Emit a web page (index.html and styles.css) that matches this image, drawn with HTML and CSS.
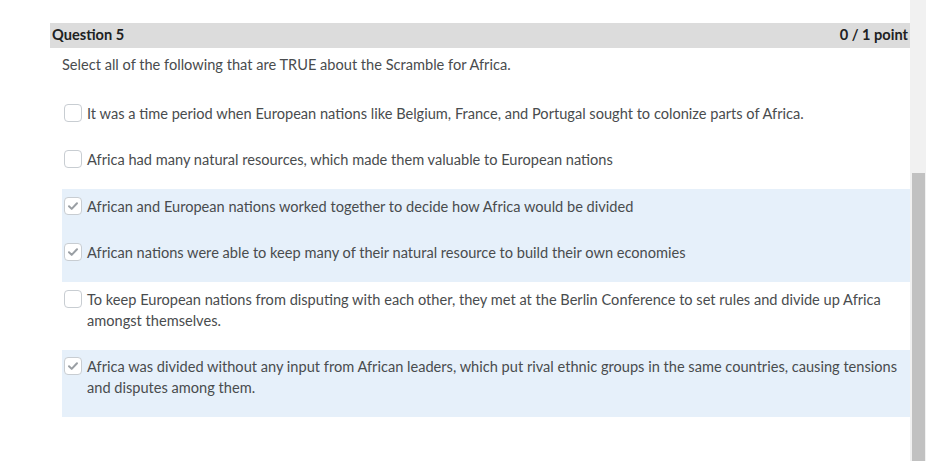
FILE: index.html
```html
<!DOCTYPE html>
<html>
<head>
<meta charset="utf-8">
<link rel="stylesheet" href="styles.css">
</head>
<body>
<div class="page">
  <main class="content">
    <div class="q-header">
      <span class="q-title">Question 5</span>
      <span class="q-points">0 / 1 point</span>
    </div>
    <p class="q-text">Select all of the following that are TRUE about the Scramble for Africa.</p>
    <ul class="options">
      <li class="option">
        <span class="box"></span>
        <span class="label">It was a time period when European nations like Belgium, France, and Portugal sought to colonize parts of Africa.</span>
      </li>
      <li class="option">
        <span class="box"></span>
        <span class="label">Africa had many natural resources, which made them valuable to European nations</span>
      </li>
      <li class="option selected">
        <span class="box"><svg viewBox="0 0 18 18" width="18" height="18"><path d="M5 9.3l2.7 2.6L13 6.2" fill="none" stroke="#9a9fa4" stroke-width="2" stroke-linecap="round" stroke-linejoin="round"/></svg></span>
        <span class="label">African and European nations worked together to decide how Africa would be divided</span>
      </li>
      <li class="option selected">
        <span class="box"><svg viewBox="0 0 18 18" width="18" height="18"><path d="M5 9.3l2.7 2.6L13 6.2" fill="none" stroke="#9a9fa4" stroke-width="2" stroke-linecap="round" stroke-linejoin="round"/></svg></span>
        <span class="label">African nations were able to keep many of their natural resource to build their own economies</span>
      </li>
      <li class="option">
        <span class="box"></span>
        <span class="label">To keep European nations from disputing with each other, they met at the Berlin Conference to set rules and divide up Africa amongst themselves.</span>
      </li>
      <li class="option selected">
        <span class="box"><svg viewBox="0 0 18 18" width="18" height="18"><path d="M5 9.3l2.7 2.6L13 6.2" fill="none" stroke="#9a9fa4" stroke-width="2" stroke-linecap="round" stroke-linejoin="round"/></svg></span>
        <span class="label">Africa was divided without any input from African leaders, which put rival ethnic groups in the same countries, causing tensions and disputes among them.</span>
      </li>
    </ul>
  </main>
  <div class="scrollbar"><div class="thumb"></div></div>
</div>
</body>
</html>
```

FILE: styles.css
```css
html, body {
  margin: 0;
  padding: 0;
  background: #ffffff;
}
body {
  font-family: Lato, "Open Sans", sans-serif;
  color: #494c4e;
  font-size: 14.6px;
}
.page {
  display: flex;
  height: 461px;
  overflow: hidden;
}
.content {
  flex: 1;
  padding: 23px 0 0 50px;
}
.q-header {
  display: flex;
  justify-content: space-between;
  align-items: center;
  height: 25px;
  box-sizing: border-box;
  padding: 0 2px 2px 2px;
  background: #dcdcdc;
  font-weight: bold;
  color: #202122;
  font-size: 14.6px;
}
.q-text {
  margin: 0;
  padding: 8px 0 0 12px;
  line-height: 18px;
}
.options {
  list-style: none;
  margin: 22px 0 0 12px;
  padding: 0;
}
.option {
  display: flex;
  align-items: flex-start;
  padding: 6.5px 10px 19px 2px;
  line-height: 21px;
}
.option.selected {
  background: #e6f0fa;
}
.box {
  flex: none;
  width: 16px;
  height: 16px;
  border: 1px solid #c8cdd2;
  border-radius: 4px;
  background: #ffffff;
  margin: 1px 5px 0 0;
  position: relative;
}
.box svg {
  position: absolute;
  left: -1px;
  top: -1px;
}
.label {
  flex: 1;
}
.scrollbar {
  flex: none;
  width: 16px;
  margin-right: 10px;
  background: #f1f1f1;
  display: flex;
  flex-direction: column;
  align-items: center;
}
.thumb {
  margin-top: 173px;
  width: 13px;
  flex: 1;
  background: #c1c1c1;
}
```
